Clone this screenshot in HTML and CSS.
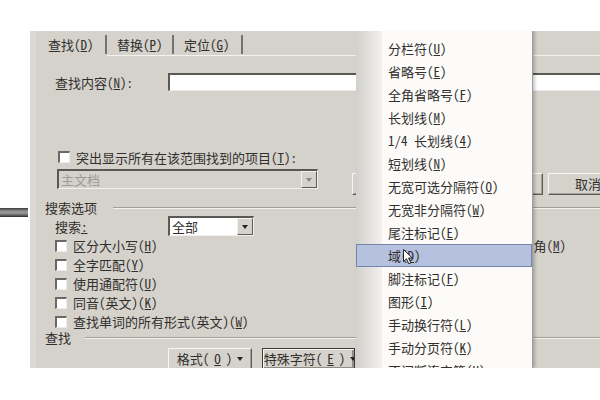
FILE: index.html
```html
<!DOCTYPE html>
<html lang="zh-CN">
<head>
  <meta charset="UTF-8" />
  <title>查找和替换</title>
  <meta name="viewport" content="width=device-width, initial-scale=1" />
  <link rel="stylesheet" href="styles.css">
</head>
<body>
  <div class="stage">
    <div class="side"><div class="side-bar"></div></div>

    <div class="dialog">
      <!-- 选项卡 -->
      <div class="tabs">
        <div class="tab active"><div class="tab-face">查找(<u>D</u>)</div></div>
        <div class="tab tab-2"><div class="tab-face">替换(<u>P</u>)</div></div>
        <div class="tab"><div class="tab-face">定位(<u>G</u>)</div></div>
        <div class="tab-fill"></div>
      </div>

      <div class="find-row">
        <label class="find-label">查找内容(<u>N</u>):</label>
        <div class="textbox"></div>
      </div>

      <div class="check highlight-row">
        <span class="box"></span>
        <span>突出显示所有在该范围找到的项目(<u>T</u>):</span>
      </div>

      <div class="scope-row">
        <div class="select disabled">
          <span class="select-text">主文档</span>
          <span class="select-btn"><i class="tri"></i></span>
        </div>
        <div class="btn wide">突出显示</div>
        <div class="btn mid">下一处</div>
        <div class="btn cancel">取消</div>
      </div>

      <!-- 搜索选项 -->
      <div class="group-head">
        <span>搜索选项</span>
        <span class="group-line"></span>
      </div>

      <div class="search-row">
        <label class="find-label">搜索<u>:</u></label>
        <div class="select small">
          <span class="select-text">全部</span>
          <span class="select-btn"><i class="tri"></i></span>
        </div>
      </div>

      <div class="options">
        <div class="check"><span class="box"></span><span>区分大小写(<u>H</u>)</span></div>
        <div class="check"><span class="box"></span><span>全字匹配(<u>Y</u>)</span></div>
        <div class="check"><span class="box"></span><span>使用通配符(<u>U</u>)</span></div>
        <div class="check"><span class="box"></span><span>同音(英文)(<u>K</u>)</span></div>
        <div class="check"><span class="box"></span><span>查找单词的所有形式(英文)(<u>W</u>)</span></div>
        <div class="check"><span class="box"></span><span>区分全/半角(<u>M</u>)</span></div>
      </div>

      <div class="group-head">
        <span>查找</span>
        <span class="group-line short"></span>
      </div>

      <div class="bottom-row">
        <div class="btn menu-btn">格式(<u>O</u>) <i class="tri"></i></div>
        <div class="btn menu-btn focused">特殊字符(<u>E</u>) <i class="tri"></i></div>
      </div>

      <!-- 特殊字符菜单 -->
      <div class="menu">
        <div class="menu-item">分栏符(<u>U</u>)</div>
        <div class="menu-item">省略号(<u>E</u>)</div>
        <div class="menu-item">全角省略号(<u>F</u>)</div>
        <div class="menu-item">长划线(<u>M</u>)</div>
        <div class="menu-item">1/4 长划线(<u>4</u>)</div>
        <div class="menu-item">短划线(<u>N</u>)</div>
        <div class="menu-item">无宽可选分隔符(<u>O</u>)</div>
        <div class="menu-item">无宽非分隔符(<u>W</u>)</div>
        <div class="menu-item">尾注标记(<u>E</u>)</div>
        <div class="menu-item hot">域(<u>D</u>)</div>
        <div class="menu-item">脚注标记(<u>F</u>)</div>
        <div class="menu-item">图形(<u>I</u>)</div>
        <div class="menu-item">手动换行符(<u>L</u>)</div>
        <div class="menu-item">手动分页符(<u>K</u>)</div>
        <div class="menu-item">不间断连字符(<u>H</u>)</div>

        <svg class="cursor" width="11" height="16" viewBox="0 0 11 16">
          <path d="M0.5 0.5 L0.5 12.5 L3.5 9.8 L5.8 14.8 L7.8 13.9 L5.6 9 L9.3 9 Z" fill="#fff" stroke="#222" stroke-width="1" />
        </svg>
      </div>
    </div>
  </div>
</body>
</html>
```

FILE: styles.css
```css
* {
  margin: 0; padding: 0; box-sizing: border-box;
}

html, body {
  width: 600px;
  height: 400px;
  overflow: hidden;
  background: #fff;
}

body {
  font-family: "Noto Sans Mono CJK SC", "Noto Sans CJK SC", sans-serif;
  font-size: 13px;
  color: #312f2c;
}

u {
  text-underline-offset: 1px;
}

.stage {
  display: flex;
  margin-top: 31px;
  height: 337px;
  overflow: hidden;
}

/* 左侧残留的工具条 */
.side {
  width: 30px;
  flex: none;
  padding-top: 177px;
}

.side-bar {
  width: 28px;
  height: 9px;
  background: linear-gradient(#3a3a3a, #858585 30%, #9c9c9c 50%, #6e6e6e 75%, #2c2c2c);
}

.dialog {
  flex: none;
  width: 620px;
  position: relative;
  background: #d5d2cc;
  box-shadow: inset 6px 0 0 #dbd9d4;
}

/* 选项卡 */
.tabs {
  display: flex;
  height: 25px;
  padding-left: 8px;
}

.tab {
  width: 69px;
  padding-top: 4px;
  border-bottom: 1px solid #f3f2ef;
}

.tab.active {
  border-bottom-color: transparent;
}

.tab-2 {
  width: 67px;
}

.tab-face {
  height: 19px;
  line-height: 19px;
  padding-left: 10px;
  border-right: 2px solid #76736e;
}

.tab-fill {
  flex: 1;
  border-bottom: 1px solid #f3f2ef;
}

.find-row, .search-row {
  display: flex;
  align-items: center;
  padding-left: 25px;
}

.find-row {
  margin-top: 17px;
  height: 18px;
}

.find-label {
  width: 113px;
  flex: none;
}

.textbox {
  flex: 1;
  height: 18px;
  background: #fff;
  border-top: 2px solid #5a5854;
  border-left: 2px solid #5a5854;
  border-bottom: 1px solid #ebe9e4;
}

.check {
  display: flex;
  align-items: center;
  gap: 6px;
  white-space: nowrap;
}

.box {
  width: 12px;
  height: 12px;
  flex: none;
  background: #fff;
  border-top: 2px solid #6a6864;
  border-left: 2px solid #6a6864;
  border-right: 1px solid #ecebe7;
  border-bottom: 1px solid #ecebe7;
}

.highlight-row {
  margin-top: 60px;
  height: 12px;
  padding-left: 28px;
}

.scope-row {
  display: flex;
  align-items: flex-start;
  height: 26px;
  margin-top: 6px;
  padding-left: 27px;
}

.select {
  display: flex;
  height: 20px;
  background: #fff;
  border-top: 2px solid #5a5854;
  border-left: 2px solid #5a5854;
  border-right: 1px solid #f1f0ec;
  border-bottom: 1px solid #f1f0ec;
}

.select.disabled {
  width: 261px;
  background: #d5d2cc;
  color: #9d9a94;
}

.select.small {
  width: 86px;
}

.select-text {
  flex: 1;
  padding-left: 2px;
  line-height: 17px;
}

.select-btn {
  width: 16px;
  display: flex;
  align-items: center;
  justify-content: center;
  background: #d5d2cc;
  border-top: 1px solid #f4f3f0;
  border-left: 1px solid #f4f3f0;
  border-right: 1px solid #5d5b57;
  border-bottom: 1px solid #5d5b57;
}

.tri {
  display: inline-block;
  width: 0;
  height: 0;
  border-left: 3.5px solid transparent;
  border-right: 3.5px solid transparent;
  border-top: 4px solid #222;
}

.disabled .tri {
  border-top-color: #8a8782;
}

.btn {
  height: 22px;
  line-height: 20px;
  text-align: center;
  white-space: nowrap;
  overflow: hidden;
  background: #d5d2cc;
  border-top: 1px solid #f6f5f2;
  border-left: 1px solid #f6f5f2;
  border-right: 1px solid #5d5b57;
  border-bottom: 1px solid #5d5b57;
  box-shadow: inset -1px -1px 0 #a3a09a;
}

.scope-row .btn {
  margin-top: 4px;
}

.wide {
  width: 98px;
  margin-left: 34px;
}

.mid {
  width: 88px;
  margin-left: 5px;
}

.cancel {
  width: 80px;
  margin-left: 5px;
}

/* 分组标题 */
.group-head {
  display: flex;
  align-items: center;
  height: 14px;
  margin-top: 6px;
  padding-left: 15px;
  line-height: 14px;
}

.group-line {
  flex: 1;
  height: 2px;
  margin-left: 16px;
  border-top: 1px solid #a29f99;
  border-bottom: 1px solid #f4f3f0;
}

.group-line.short {
  margin-left: 14px;
}

.search-row {
  height: 20px;
  margin-top: 1px;
}

.options {
  display: grid;
  grid-template-columns: 402px auto;
  grid-template-rows: repeat(5, 19px);
  grid-auto-flow: column;
  padding-left: 25px;
}

.options + .group-head {
  margin-top: 0;
}

.bottom-row {
  display: flex;
  gap: 10px;
  margin-top: 3px;
  padding-left: 138px;
}

.menu-btn {
  display: flex;
  align-items: center;
  justify-content: center;
  gap: 5px;
  width: 84px;
}

.menu-btn.focused {
  width: 93px;
  padding-left: 3px;
  border: 1px solid #3e3c39;
  box-shadow: inset 1px 1px 0 #f6f5f2, inset -2px -2px 0 #8f8c86;
}

/* 下拉菜单 */
.menu {
  position: absolute;
  left: 326px;
  top: 0;
  bottom: 0;
  width: 177px;
  padding-top: 6px;
  overflow: hidden;
  background: linear-gradient(90deg, #d2d0cc, #f2f1ee 26px, #fcfbf9 26px);
  border-right: 1px solid #a19f9b;
  box-shadow: 2px 0 3px rgba(0, 0, 0, 0.22);
}

.menu-item {
  height: 23px;
  line-height: 23px;
  padding-left: 32px;
  white-space: nowrap;
}

.menu-item.hot {
  background: #b5c1de;
  box-shadow: inset 0 0 0 1px #7485ae;
}

.cursor {
  position: absolute;
  left: 47px;
  top: 218px;
}
```
